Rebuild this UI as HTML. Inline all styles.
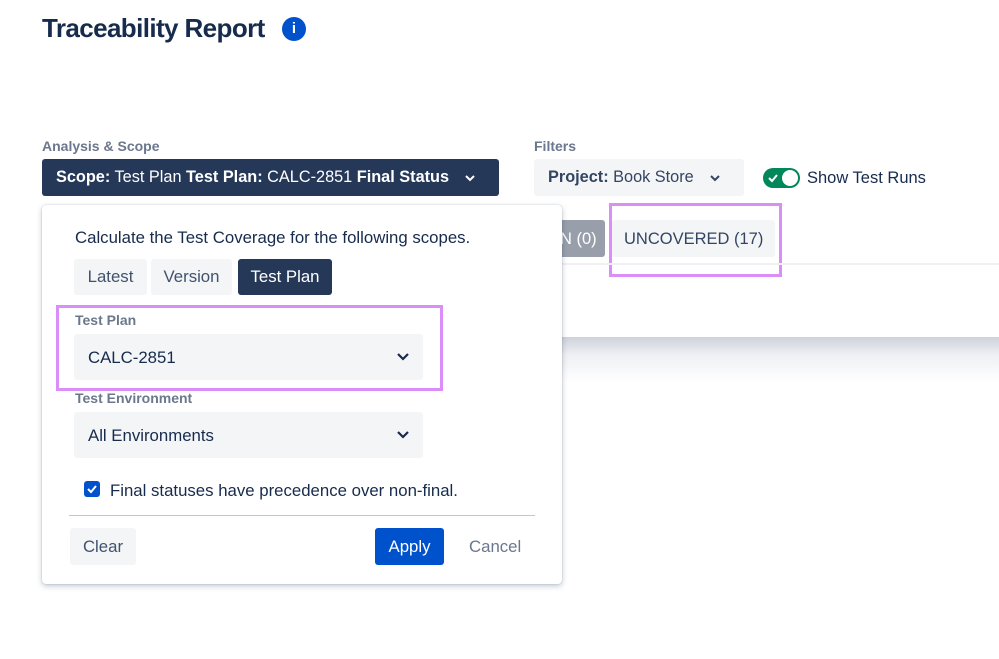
<!DOCTYPE html>
<html><head><meta charset="utf-8"><style>
*{box-sizing:border-box;margin:0;padding:0}
body{width:999px;height:659px;background:#fff;font-family:"Liberation Sans",sans-serif;color:#172b4d;position:relative;overflow:hidden}
.a{position:absolute}
.lbl{font-size:14px;font-weight:bold;color:#6b778c}
.btn{position:absolute;border-radius:3px;font-size:16.8px;display:flex;align-items:center;justify-content:center}
</style></head><body>
<div class="a" style="left:42px;top:13px;font-size:26px;font-weight:bold;color:#172b4d;letter-spacing:-0.6px">Traceability Report</div>
<div class="a" style="left:282px;top:17px;width:24px;height:24px;border-radius:50%;background:#0052cc;color:#fff;font-weight:bold;font-size:15px;text-align:center;line-height:24px">i</div>

<div class="a lbl" style="left:42px;top:138px">Analysis &amp; Scope</div>
<div class="a" style="left:42px;top:159px;width:457px;height:37px;background:#253858;border-radius:3px;color:#fff;font-size:16.3px;line-height:37px;padding-left:14px"><b>Scope:</b> Test Plan <b>Test Plan:</b> CALC-2851 <b>Final Status</b>
<svg class="a" style="left:422px;top:14px" width="12" height="10" viewBox="0 0 12 10"><path d="M2 3l4 4 4-4" stroke="#fff" stroke-width="2" fill="none"/></svg></div>

<div class="a lbl" style="left:534px;top:138px">Filters</div>
<div class="a" style="left:534px;top:159px;width:210px;height:37px;background:#f4f5f7;border-radius:3px;font-size:16.3px;line-height:37px;padding-left:14px;color:#344563"><b>Project:</b> Book Store
<svg class="a" style="left:175px;top:14px" width="12" height="10" viewBox="0 0 12 10"><path d="M2 3l4 4 4-4" stroke="#344563" stroke-width="2" fill="none"/></svg></div>
<div class="a" style="left:763px;top:168px;width:37px;height:20px;border-radius:10px;background:#00875a"></div>
<div class="a" style="left:782px;top:170px;width:16px;height:16px;border-radius:50%;background:#fff"></div>
<svg class="a" style="left:767px;top:172px" width="12" height="12" viewBox="0 0 12 12"><path d="M2 6l3 3 5-6" stroke="#fff" stroke-width="2" fill="none"/></svg>
<div class="a" style="left:807px;top:169px;font-size:16.5px">Show Test Runs</div>

<div class="a" style="left:540px;top:220px;width:65px;height:37px;background:#989fab;border-radius:3px;color:#fff;font-size:16.5px;line-height:38px;padding-left:20px">N (0)</div>
<div class="a" style="left:612px;top:220px;width:163px;height:37px;background:#f4f5f7;border-radius:3px;color:#344563;font-size:16.5px;line-height:38px;padding-left:12px">UNCOVERED (17)</div>
<div class="a" style="left:609px;top:203px;width:173px;height:74px;border:3px solid #dc8ef8"></div>
<div class="a" style="left:560px;top:263px;width:439px;height:2px;background:#f0f1f4"></div>
<div class="a" style="left:560px;top:337px;width:439px;height:45px;background:linear-gradient(#cdd2db,#eef0f3 40%,#fff)"></div>

<div class="a" style="left:42px;top:205px;width:520px;height:379px;background:#fff;border-radius:4px;box-shadow:0 2px 6px rgba(9,30,66,.25),0 0 1px rgba(9,30,66,.3)"></div>
<div class="a" style="left:75px;top:228px;font-size:16.8px">Calculate the Test Coverage for the following scopes.</div>
<div class="btn" style="left:74px;top:259px;width:73px;height:36px;background:#f4f5f7;color:#42526e">Latest</div>
<div class="btn" style="left:151px;top:259px;width:81px;height:36px;background:#f4f5f7;color:#42526e">Version</div>
<div class="btn" style="left:238px;top:259px;width:94px;height:36px;background:#253858;color:#fff">Test Plan</div>

<div class="a lbl" style="left:75px;top:312px">Test Plan</div>
<div class="a" style="left:74px;top:334px;width:349px;height:46px;background:#f4f5f7;border-radius:3px;font-size:16.8px;line-height:47px;padding-left:14px">CALC-2851
<svg class="a" style="left:322px;top:17px" width="14" height="12" viewBox="0 0 14 12"><path d="M2 3l5 5 5-5" stroke="#172b4d" stroke-width="2.2" fill="none"/></svg></div>
<div class="a" style="left:56px;top:305px;width:387px;height:86px;border:3px solid #dc8ef8"></div>

<div class="a lbl" style="left:75px;top:390px">Test Environment</div>
<div class="a" style="left:74px;top:412px;width:349px;height:46px;background:#f4f5f7;border-radius:3px;font-size:16.8px;line-height:47px;padding-left:14px">All Environments
<svg class="a" style="left:322px;top:17px" width="14" height="12" viewBox="0 0 14 12"><path d="M2 3l5 5 5-5" stroke="#172b4d" stroke-width="2.2" fill="none"/></svg></div>

<div class="a" style="left:84px;top:481px;width:16px;height:16px;border-radius:3px;background:#0052cc"></div>
<svg class="a" style="left:84px;top:481px" width="16" height="16" viewBox="0 0 16 16"><path d="M4 8l3 3 5-6" stroke="#fff" stroke-width="2" fill="none"/></svg>
<div class="a" style="left:110px;top:481px;font-size:16.8px">Final statuses have precedence over non-final.</div>
<div class="a" style="left:69px;top:515px;width:466px;height:1px;background:#c1c7d0"></div>

<div class="btn" style="left:70px;top:528px;width:66px;height:37px;background:#f4f5f7;color:#42526e">Clear</div>
<div class="btn" style="left:375px;top:528px;width:69px;height:37px;background:#0052cc;color:#fff">Apply</div>
<div class="a" style="left:469px;top:537px;font-size:16.8px;color:#6b778c">Cancel</div>
</body></html>
